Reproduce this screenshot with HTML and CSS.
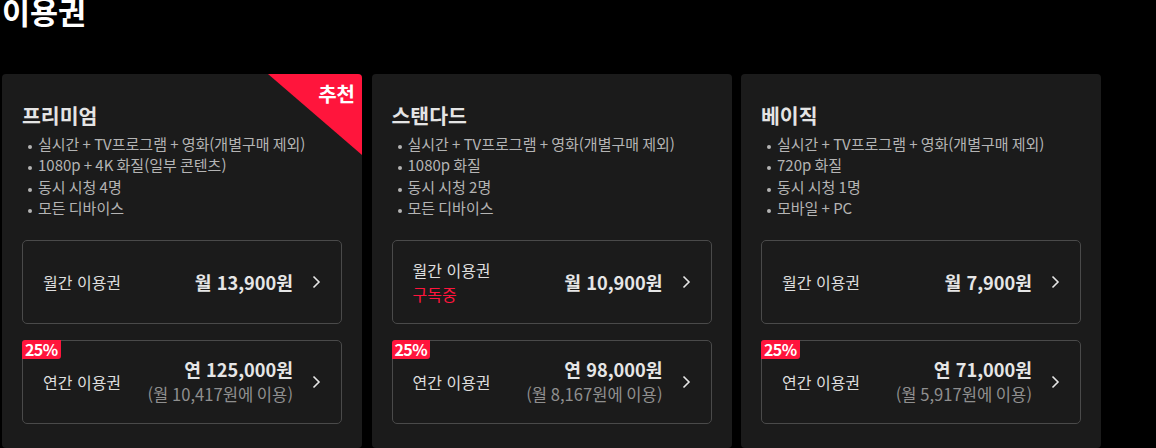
FILE: index.html
```html
<!DOCTYPE html>
<html lang="ko">
<head>
<meta charset="utf-8">
<title>이용권</title>
<link rel="stylesheet" href="styles.css">
</head>
<body>
<div class="page">
  <h1 class="page-title">이용권</h1>
  <div class="plans">
    <section class="plan">
      <div class="ribbon"><span class="ribbon-text">추천</span></div>
      <h2 class="plan-name">프리미엄</h2>
      <ul class="features">
        <li>실시간 + TV프로그램 + 영화(개별구매 제외)</li>
        <li>1080p + 4K 화질(일부 콘텐츠)</li>
        <li>동시 시청 4명</li>
        <li>모든 디바이스</li>
      </ul>
      <div class="options">
        <a class="option">
          <div class="opt-label"><span>월간 이용권</span></div>
          <div class="opt-price"><span class="price">월 13,900원</span></div>
          <svg class="chev" width="9" height="14" viewBox="0 0 9 14"><polyline points="1.5,1.5 7,7 1.5,12.5" fill="none" stroke="#e6e6e6" stroke-width="1.6"/></svg>
        </a>
        <a class="option">
          <span class="badge">25%</span>
          <div class="opt-label"><span>연간 이용권</span></div>
          <div class="opt-price"><span class="price">연 125,000원</span><span class="sub">(월 10,417원에 이용)</span></div>
          <svg class="chev" width="9" height="14" viewBox="0 0 9 14"><polyline points="1.5,1.5 7,7 1.5,12.5" fill="none" stroke="#e6e6e6" stroke-width="1.6"/></svg>
        </a>
      </div>
    </section>
    <section class="plan">
      <h2 class="plan-name">스탠다드</h2>
      <ul class="features">
        <li>실시간 + TV프로그램 + 영화(개별구매 제외)</li>
        <li>1080p 화질</li>
        <li>동시 시청 2명</li>
        <li>모든 디바이스</li>
      </ul>
      <div class="options">
        <a class="option">
          <div class="opt-label"><span>월간 이용권</span><span class="status">구독중</span></div>
          <div class="opt-price"><span class="price">월 10,900원</span></div>
          <svg class="chev" width="9" height="14" viewBox="0 0 9 14"><polyline points="1.5,1.5 7,7 1.5,12.5" fill="none" stroke="#e6e6e6" stroke-width="1.6"/></svg>
        </a>
        <a class="option">
          <span class="badge">25%</span>
          <div class="opt-label"><span>연간 이용권</span></div>
          <div class="opt-price"><span class="price">연 98,000원</span><span class="sub">(월 8,167원에 이용)</span></div>
          <svg class="chev" width="9" height="14" viewBox="0 0 9 14"><polyline points="1.5,1.5 7,7 1.5,12.5" fill="none" stroke="#e6e6e6" stroke-width="1.6"/></svg>
        </a>
      </div>
    </section>
    <section class="plan">
      <h2 class="plan-name">베이직</h2>
      <ul class="features">
        <li>실시간 + TV프로그램 + 영화(개별구매 제외)</li>
        <li>720p 화질</li>
        <li>동시 시청 1명</li>
        <li>모바일 + PC</li>
      </ul>
      <div class="options">
        <a class="option">
          <div class="opt-label"><span>월간 이용권</span></div>
          <div class="opt-price"><span class="price">월 7,900원</span></div>
          <svg class="chev" width="9" height="14" viewBox="0 0 9 14"><polyline points="1.5,1.5 7,7 1.5,12.5" fill="none" stroke="#e6e6e6" stroke-width="1.6"/></svg>
        </a>
        <a class="option">
          <span class="badge">25%</span>
          <div class="opt-label"><span>연간 이용권</span></div>
          <div class="opt-price"><span class="price">연 71,000원</span><span class="sub">(월 5,917원에 이용)</span></div>
          <svg class="chev" width="9" height="14" viewBox="0 0 9 14"><polyline points="1.5,1.5 7,7 1.5,12.5" fill="none" stroke="#e6e6e6" stroke-width="1.6"/></svg>
        </a>
      </div>
    </section>
  </div>
</div>
</body>
</html>
```

FILE: styles.css
```css
* { box-sizing: border-box; }
html, body {
  margin: 0;
  background: #000;
  color: #fff;
  font-family: "Noto Sans CJK KR", "Noto Sans", sans-serif;
}
.page {
  padding: 0 2px;
  overflow: hidden;
  height: 448px;
}
.page-title {
  margin: -3px 0 0;
  font-size: 30.5px;
  line-height: 28px;
  font-weight: 700;
  color: #fff;
}
.plans {
  margin-top: 49px;
  display: flex;
  gap: 9.5px;
}
.plan {
  position: relative;
  width: 360px;
  flex: none;
  background: #1b1b1b;
  border-radius: 4px;
  padding: 27px 20px 24px;
  overflow: hidden;
}
.ribbon {
  position: absolute;
  top: 0;
  right: 0;
  width: 94px;
  height: 81px;
  background: #ff153c;
  clip-path: polygon(0 0, 100% 0, 100% 100%);
}
.ribbon-text {
  position: absolute;
  top: 7px;
  right: 7px;
  font-size: 20px;
  font-weight: 700;
  line-height: 26px;
  color: #fff;
}
.plan-name {
  margin: 0;
  font-size: 20.5px;
  line-height: 28px;
  font-weight: 700;
  color: #e4e4e4;
}
.features {
  list-style: none;
  margin: 4px 0 0;
  padding: 0;
  font-size: 15px;
  line-height: 21.4px;
  word-spacing: -1px;
  color: #b4b4b4;
}
.features li {
  position: relative;
  padding-left: 16px;
}
.features li::before {
  content: "";
  position: absolute;
  left: 6px;
  top: 12px;
  width: 4px;
  height: 4px;
  border-radius: 50%;
  background: #b4b4b4;
}
.options {
  margin-top: 21px;
  display: flex;
  flex-direction: column;
  gap: 16px;
}
.option {
  position: relative;
  display: flex;
  align-items: center;
  height: 84px;
  border: 1px solid #4a4a4a;
  border-radius: 5px;
  padding: 0 20px;
}
.badge {
  position: absolute;
  top: -1px;
  left: -1px;
  height: 19px;
  padding: 0 3px;
  background: #ff153c;
  color: #fff;
  font-size: 16px;
  font-weight: 700;
  line-height: 19px;
  letter-spacing: -0.6px;
  border-radius: 3px 0 3px 0;
}
.opt-label {
  flex: 1;
  display: flex;
  flex-direction: column;
  gap: 2px;
  font-size: 16px;
  line-height: 22px;
  color: #dedede;
}
.status {
  color: #ff153c;
}
.opt-price {
  display: flex;
  flex-direction: column;
  align-items: flex-end;
  gap: 1px;
}
.price {
  font-size: 18.2px;
  font-weight: 700;
  line-height: 24px;
  color: #e6e6e6;
}
.sub {
  font-size: 16.6px;
  line-height: 24px;
  word-spacing: -1px;
  color: #8f8f8f;
}
.chev {
  margin-left: 19px;
  flex: none;
}
```
